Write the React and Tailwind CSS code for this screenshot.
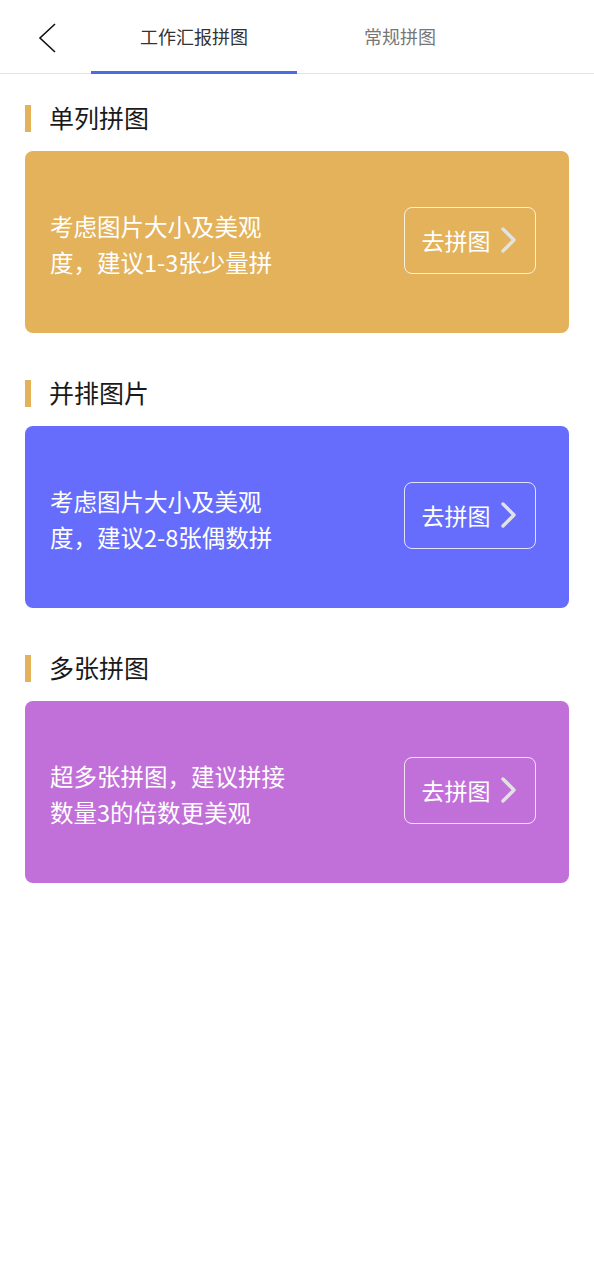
import React from "react";

const font = { fontFamily: '"Noto Sans CJK SC", "Noto Sans", sans-serif' };

function Chevron() {
  return (
    <svg width="20" height="28" viewBox="0 0 20 28" className="ml-[8px]">
      <path d="M4 3 L15 14 L4 25" fill="none" stroke="#e2e2e2" strokeWidth="3.4" strokeLinecap="round" strokeLinejoin="round" />
    </svg>
  );
}

function Section({ title, color, lines, first }) {
  return (
    <div className={first ? "" : "mt-[45px]"}>
      <div className="flex items-center h-[30px] pl-[25px]">
        <div className="w-[6px] h-[27px] bg-[#e3b25b]" />
        <div className="ml-[18px] text-[25px] leading-[30px] text-[#1a1a1a] mt-[-2px]">{title}</div>
      </div>
      <div className={`mt-[18px] mx-[25px] h-[182px] rounded-[8px] flex items-center justify-between pl-[25px] pr-[33px] ${color}`}>
        <div className="text-white text-[23.5px] leading-[36px] pt-[3px]">
          {lines.map((l, i) => (
            <div key={i}>{l}</div>
          ))}
        </div>
        <div className="w-[132px] h-[67px] mb-[4px] rounded-[8px] border border-white/80 flex items-center justify-center text-white text-[23px]">
          <span>去拼图</span>
          <Chevron />
        </div>
      </div>
    </div>
  );
}

export default function App() {
  return (
    <div className="w-[594px] h-[1280px] bg-white" style={font}>
      <div className="relative h-[74px] border-b border-[#e3e3e3] flex">
        <div className="absolute left-[36px] top-[20px]">
          <svg width="24" height="36" viewBox="0 0 24 36">
            <path d="M19 4 L4 18 L19 32" fill="none" stroke="#111" strokeWidth="1.6" />
          </svg>
        </div>
        <div className="ml-[91px] w-[206px] relative flex items-center justify-center text-[18px] text-[#333]">
          工作汇报拼图
          <div className="absolute left-0 right-0 bottom-[-1px] h-[3px] bg-[#4a6de0]" />
        </div>
        <div className="w-[206px] flex items-center justify-center text-[18px] text-[#777]">常规拼图</div>
      </div>
      <div className="pt-[29px]">
        <Section first title="单列拼图" color="bg-[#e3b25b]" lines={["考虑图片大小及美观", "度，建议1-3张少量拼"]} />
        <Section title="并排图片" color="bg-[#666dfd]" lines={["考虑图片大小及美观", "度，建议2-8张偶数拼"]} />
        <Section title="多张拼图" color="bg-[#c270d9]" lines={["超多张拼图，建议拼接", "数量3的倍数更美观"]} />
      </div>
    </div>
  );
}
